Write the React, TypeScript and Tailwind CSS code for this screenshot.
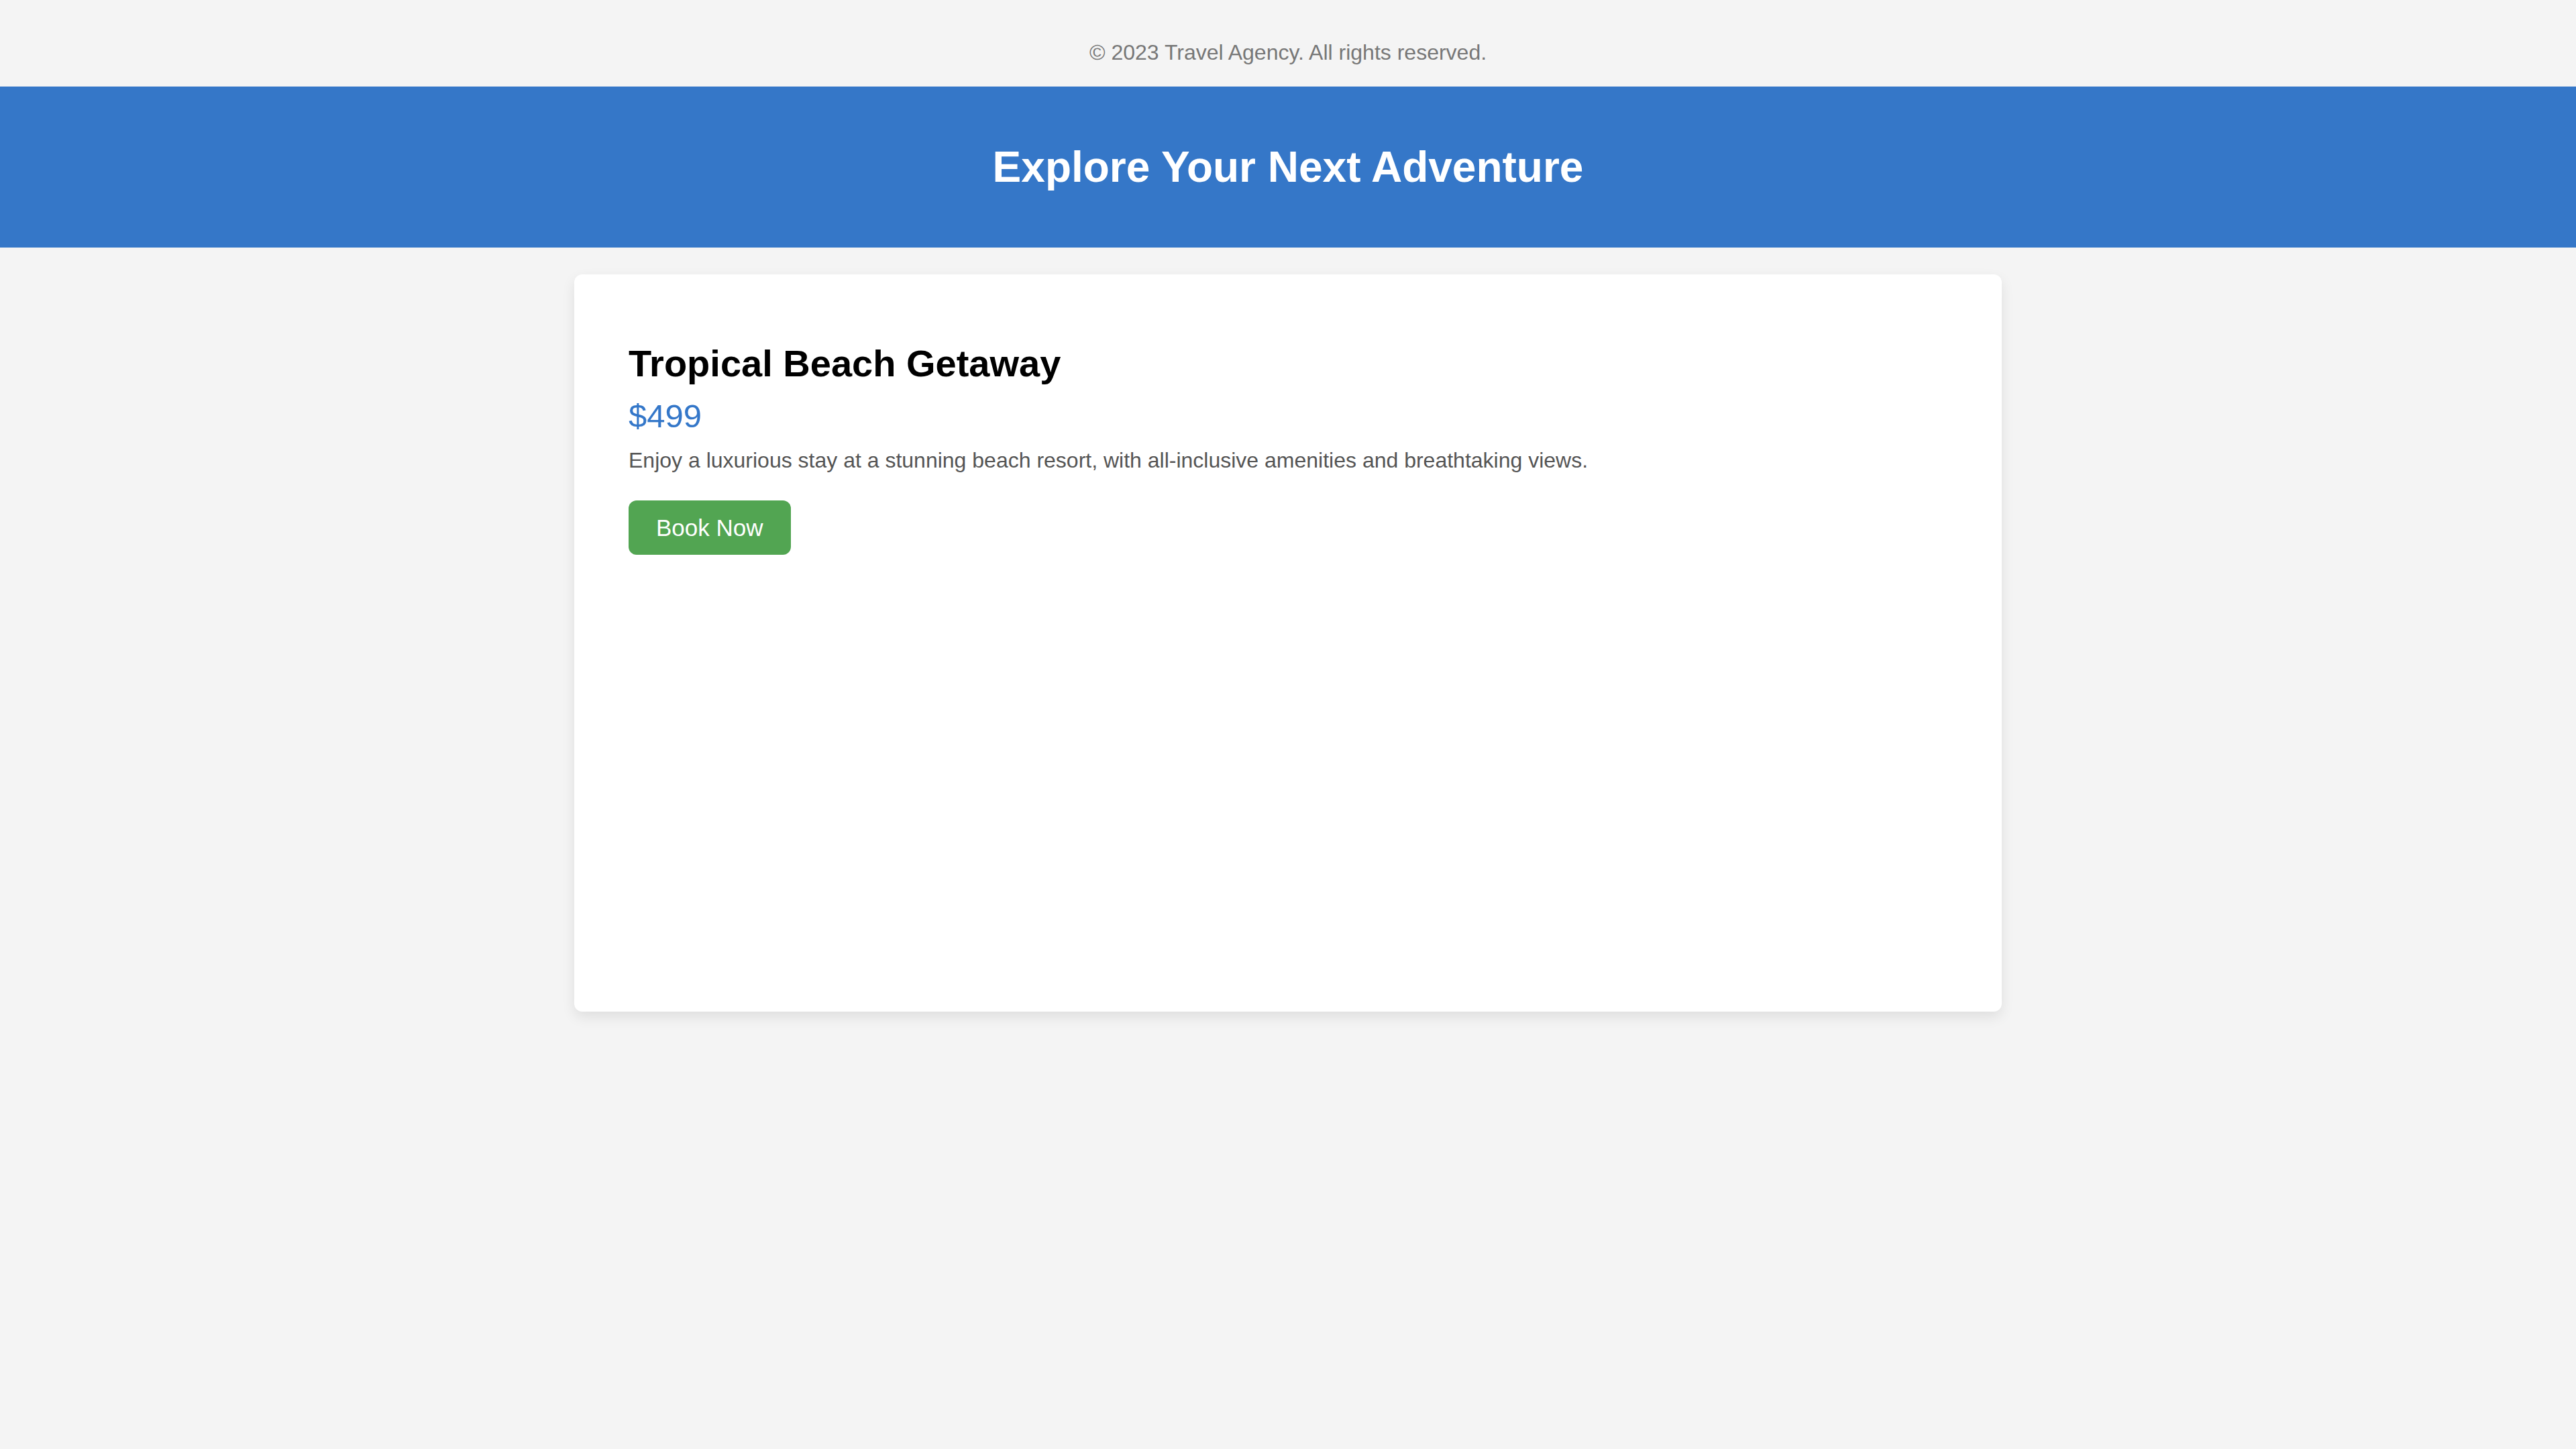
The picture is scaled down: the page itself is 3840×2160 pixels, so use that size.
export default function App() {
  return (
    <div className="min-h-screen w-full bg-[#f4f4f4] font-['Liberation_Sans',Arial,sans-serif]">
      <footer className="flex h-[129px] items-center justify-center pt-[26px] text-[32px] leading-none text-[#777777]">
        © 2023 Travel Agency. All rights reserved.
      </footer>

      <header className="flex h-[240px] items-center justify-center bg-[#3577c8]">
        <h1 className="text-[64px] font-bold leading-none text-white">
          Explore Your Next Adventure
        </h1>
      </header>

      <main className="flex justify-center pt-[40px]">
        <div className="flex h-[1099px] w-[2128px] flex-col items-start rounded-[12px] bg-white px-[81px] pt-[105px] shadow-[0_8px_20px_rgba(0,0,0,0.09)]">
          <h2 className="text-[56px] font-bold leading-none text-black">
            Tropical Beach Getaway
          </h2>
          <p className="mt-[26px] text-[49px] leading-none text-[#3477c9]">
            $499
          </p>
          <p className="mt-[25px] text-[32px] leading-none text-[#555555]">
            Enjoy a luxurious stay at a stunning beach resort, with
            all-inclusive amenities and breathtaking views.
          </p>
          <button className="mt-[44px] flex h-[81px] items-center rounded-[12px] bg-[#52a552] px-[41px] text-[35px] leading-none text-white">
            Book Now
          </button>
        </div>
      </main>
    </div>
  );
}
